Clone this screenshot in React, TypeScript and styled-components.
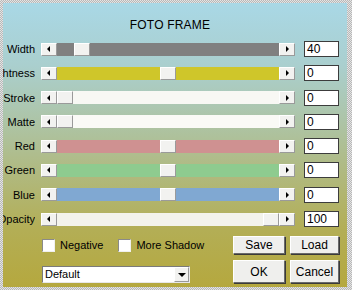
import styled, { createGlobalStyle } from "styled-components";

const GlobalStyle = createGlobalStyle`
  html, body {
    margin: 0;
    padding: 0;
  }
  body {
    width: 352px;
    height: 290px;
    overflow: hidden;
    background-color: #d4d4d4;
    background-image: repeating-conic-gradient(#b8b8b8 0 25%, #e4e4e4 0 50%);
    background-size: 2px 2px;
    font-family: "Liberation Sans", Arial, sans-serif;
  }
`;

const sliders = [
  { label: "Width", color: "#808080", pos: 0.083, value: "40" },
  { label: "Brightness", color: "#cfc62a", pos: 0.5, value: "0" },
  { label: "Stroke", color: "#f8f8f4", pos: 0, value: "0" },
  { label: "Matte", color: "#fafaf6", pos: 0, value: "0" },
  { label: "Red", color: "#cf9191", pos: 0.5, value: "0" },
  { label: "Green", color: "#8ecb8f", pos: 0.5, value: "0" },
  { label: "Blue", color: "#80a8d2", pos: 0.5, value: "0" },
  { label: "Opacity", color: "#f3f3ec", pos: 1, value: "100" },
];

const App = () => {
  return (
    <>
      <GlobalStyle />
      <Panel>
        <Title>FOTO FRAME</Title>
        <Rows>
          {sliders.map((s) => (
            <Row key={s.label}>
              <Label>{s.label}</Label>
              <Slider>
                <ArrowButton>
                  <Arrow $dir="left" />
                </ArrowButton>
                <Track $color={s.color}>
                  <Thumb $pos={s.pos} />
                </Track>
                <ArrowButton>
                  <Arrow $dir="right" />
                </ArrowButton>
              </Slider>
              <ValueBox>{s.value}</ValueBox>
            </Row>
          ))}
        </Rows>
        <Footer>
          <FooterRow>
            <Checks>
              <CheckItem>
                <CheckBox />
                <span>Negative</span>
              </CheckItem>
              <CheckItem>
                <CheckBox />
                <span>More Shadow</span>
              </CheckItem>
            </Checks>
            <Buttons>
              <Button $w={52} $h={18}>Save</Button>
              <Button $w={49} $h={18}>Load</Button>
            </Buttons>
          </FooterRow>
          <FooterRow $end>
            <Select>
              <SelectText>Default</SelectText>
              <SelectButton>
                <DownArrow />
              </SelectButton>
            </Select>
            <Buttons>
              <Button $w={52} $h={23}>OK</Button>
              <Button $w={49} $h={23}>Cancel</Button>
            </Buttons>
          </FooterRow>
        </Footer>
      </Panel>
    </>
  );
};

const Panel = styled.div`
  margin: 3px 5px 3px 3px;
  height: 284px;
  box-sizing: border-box;
  padding: 15px 8px 0 0;
  background: linear-gradient(
    180deg,
    #a9d8e6 0%,
    #aacfce 22%,
    #adc4a6 42%,
    #b0b97f 60%,
    #b3ae55 80%,
    #b5a83e 100%
  );
  color: #000;
  display: flex;
  flex-direction: column;
`;

const Title = styled.div`
  font-size: 12px;
  line-height: 14px;
  height: 14px;
  text-align: center;
  padding-right: 2px;
  letter-spacing: 0.2px;
`;

const Rows = styled.div`
  margin-top: 9px;
  display: flex;
  flex-direction: column;
  gap: 8.3px;
`;

const Row = styled.div`
  height: 16px;
  display: flex;
  align-items: center;
`;

const Label = styled.div`
  width: 32px;
  flex: none;
  overflow: hidden;
  white-space: nowrap;
  display: flex;
  justify-content: flex-end;
  font-size: 11px;
  line-height: 16px;
  margin-right: 6px;
`;

const Slider = styled.div`
  width: 254px;
  height: 13px;
  display: flex;
  flex: none;
`;

const raised = `
  box-sizing: border-box;
  background: #f2f2f0;
  border-top: 1px solid #ffffff;
  border-left: 1px solid #ffffff;
  border-right: 1px solid #9a9a9a;
  border-bottom: 1px solid #9a9a9a;
`;

const ArrowButton = styled.div`
  ${raised}
  width: 16px;
  height: 13px;
  flex: none;
  display: flex;
  align-items: center;
  justify-content: center;
`;

const Arrow = styled.div<{ $dir: "left" | "right" }>`
  width: 0;
  height: 0;
  border-top: 3px solid transparent;
  border-bottom: 3px solid transparent;
  ${(p) =>
    p.$dir === "left"
      ? "border-right: 3px solid #000; margin-right: 1px;"
      : "border-left: 3px solid #000; margin-left: 1px;"}
`;

const Track = styled.div<{ $color: string }>`
  flex: 1;
  position: relative;
  background: ${(p) => p.$color};
`;

const Thumb = styled.div<{ $pos: number }>`
  ${raised}
  position: absolute;
  top: 0;
  width: 16px;
  height: 13px;
  left: calc((100% - 16px) * ${(p) => p.$pos});
`;

const ValueBox = styled.div`
  margin-left: 9px;
  width: 35px;
  height: 16px;
  box-sizing: border-box;
  background: #fff;
  border: 1px solid #3c3c3c;
  font-size: 12px;
  line-height: 14px;
  padding-left: 2px;
`;

const Footer = styled.div`
  margin-top: 9px;
  padding-left: 39px;
  display: flex;
  flex-direction: column;
  gap: 6px;
`;

const FooterRow = styled.div<{ $end?: boolean }>`
  display: flex;
  justify-content: space-between;
  align-items: ${(p) => (p.$end ? "flex-end" : "center")};
`;

const Checks = styled.div`
  display: flex;
  gap: 15px;
  font-size: 11px;
`;

const CheckItem = styled.label`
  display: flex;
  align-items: center;
  gap: 5px;
`;

const CheckBox = styled.span`
  width: 13px;
  height: 13px;
  box-sizing: border-box;
  background: #fff;
  border-top: 1px solid #8a8a8a;
  border-left: 1px solid #8a8a8a;
  border-right: 1px solid #f0f0f0;
  border-bottom: 1px solid #f0f0f0;
`;

const Buttons = styled.div`
  display: flex;
  gap: 5px;
`;

const Button = styled.div<{ $w: number; $h: number }>`
  width: ${(p) => p.$w}px;
  height: ${(p) => p.$h}px;
  box-sizing: border-box;
  background: #efefed;
  border-top: 1px solid #ffffff;
  border-left: 1px solid #ffffff;
  border-right: 1px solid #6a6a6a;
  border-bottom: 1px solid #6a6a6a;
  box-shadow: 1px 1px 0 #3a3a3a;
  font-size: 12px;
  display: flex;
  align-items: center;
  justify-content: center;
`;

const Select = styled.div`
  width: 148px;
  height: 17px;
  box-sizing: border-box;
  background: #fff;
  border-top: 1px solid #7a7a7a;
  border-left: 1px solid #7a7a7a;
  border-right: 1px solid #e8e8e8;
  border-bottom: 1px solid #e8e8e8;
  display: flex;
`;

const SelectText = styled.div`
  flex: 1;
  font-size: 11px;
  line-height: 15px;
  padding-left: 2px;
`;

const SelectButton = styled.div`
  ${raised}
  width: 15px;
  height: 15px;
  display: flex;
  align-items: center;
  justify-content: center;
`;

const DownArrow = styled.div`
  width: 0;
  height: 0;
  border-left: 4px solid transparent;
  border-right: 4px solid transparent;
  border-top: 4px solid #000;
`;

export default App;
